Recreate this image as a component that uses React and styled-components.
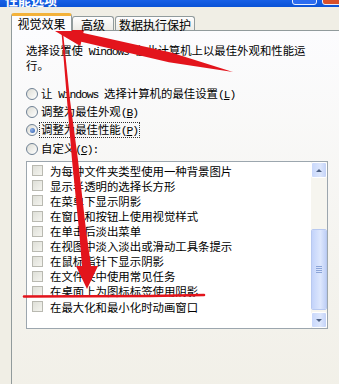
import styled, { createGlobalStyle } from "styled-components";

const GlobalStyle = createGlobalStyle`
  html, body { margin: 0; padding: 0; }
  body {
    width: 339px;
    height: 384px;
    overflow: hidden;
    background: #f0eee5;
    font-family: "Noto Sans CJK SC", sans-serif;
    font-size: 11.4px;
    color: #000;
  }
`;

const Window = styled.div`
  position: relative;
  width: 339px;
  height: 384px;
  overflow: hidden;
  background: #f0eee5;
`;

const TitleBar = styled.div`
  height: 7px;
  display: flex;
  justify-content: space-between;
  background: linear-gradient(#1860e6, #0a52d6);
  overflow: hidden;
`;

const TitleText = styled.div`
  margin: -7px 0 0 5px;
  color: #fff;
  font-weight: 700;
  font-size: 13px;
  line-height: 13px;
`;

const TitleButtons = styled.div`
  display: flex;
  gap: 5px;
  margin-top: -12px;
  margin-right: -8px;
`;

const TitleButton = styled.div`
  width: 25px;
  height: 17px;
  box-sizing: border-box;
  border: 1px solid #e8efff;
  border-radius: 3px;
  background: ${(p) => (p.$close ? "#d9502a" : "#2c6cf0")};
`;

const Body = styled.div`
  padding: 6px 0 0 11px;
`;

const TabStrip = styled.div`
  display: flex;
  align-items: flex-end;
  height: 18px;
  margin-bottom: -1px;
  position: relative;
  z-index: 1;
`;

const Tab = styled.div`
  box-sizing: border-box;
  display: flex;
  align-items: center;
  justify-content: center;
  font-size: 12px;
  width: ${(p) => p.$w}px;
  height: ${(p) => (p.$active ? 18 : 14)}px;
  margin-bottom: ${(p) => (p.$active ? 0 : 1)}px;
  border: 1px solid #919b9c;
  border-bottom: none;
  border-top: ${(p) => (p.$active ? "3px solid #f3b23a" : "1px solid #919b9c")};
  border-radius: 3px 3px 0 0;
  background: ${(p) =>
    p.$active ? "#fcfcfe" : "linear-gradient(#fefefe, #ecebe6)"};
  padding-top: ${(p) => (p.$active ? 0 : 1)}px;
  margin-right: ${(p) => (p.$active ? 0 : 1)}px;
`;

const Panel = styled.div`
  width: 400px;
  height: 400px;
  box-sizing: border-box;
  border: 1px solid #919b9c;
  background: linear-gradient(#fcfcfe, #f4f3ee 60%, #f1efe6);
  padding: 12.5px 0 0 14px;
`;

const Intro = styled.p`
  margin: 0;
  line-height: 13px;
  white-space: nowrap;
`;

const Latin = styled.span`
  font-family: "Liberation Mono", monospace;
  letter-spacing: -1.1px;
`;

const RadioGroup = styled.div`
  margin-top: 13px;
  display: flex;
  flex-direction: column;
`;

const RadioRow = styled.div`
  display: flex;
  align-items: center;
  height: 18.3px;
  white-space: nowrap;
`;

const Radio = styled.span`
  position: relative;
  width: 12px;
  height: 12px;
  box-sizing: border-box;
  border-radius: 50%;
  border: 1px solid #6f8194;
  background: linear-gradient(135deg, #dcdcd4, #ffffff);
  margin-right: 2px;
  flex-shrink: 0;

  &::after {
    content: "";
    display: ${(p) => (p.$checked ? "block" : "none")};
    position: absolute;
    left: 2.5px;
    top: 2.5px;
    width: 5px;
    height: 5px;
    border-radius: 50%;
    background: radial-gradient(circle at 35% 35%, #8fb0e6, #2f5fb0);
  }
`;

const Label = styled.span`
  padding: 0 1px;
  outline: ${(p) => (p.$focus ? "1px dotted #333" : "none")};
  line-height: 12px;
`;

const Key = styled.span`
  text-decoration: underline;
`;

const ListBox = styled.div`
  margin-top: 3.5px;
  width: 302px;
  height: 168px;
  box-sizing: border-box;
  border: 1px solid #9ca6ae;
  background: #fff;
  display: flex;
`;

const Items = styled.div`
  flex: 1;
  padding: 1px 0 0 5px;
`;

const Item = styled.div`
  display: flex;
  align-items: center;
  height: 15.1px;
  white-space: nowrap;
`;

const CheckBox = styled.span`
  width: 11px;
  height: 11px;
  box-sizing: border-box;
  border: 1px solid #b9b9b1;
  background: linear-gradient(135deg, #dedfd8, #f4f4ef);
  margin-right: 7px;
  flex-shrink: 0;
`;

const ScrollBar = styled.div`
  width: 16px;
  display: flex;
  flex-direction: column;
  background: #f6f5ef;
`;

const ScrollButton = styled.div`
  height: 16px;
  box-sizing: border-box;
  border: 1px solid #fff;
  border-radius: 2px;
  background: linear-gradient(90deg, #c9d8fb, #dce6fc 60%, #c4d3f8);
  display: flex;
  align-items: center;
  justify-content: center;

  &::before {
    content: "";
    border-left: 3px solid transparent;
    border-right: 3px solid transparent;
    ${(p) =>
      p.$down
        ? "border-top: 3px solid #4d6185;"
        : "border-bottom: 3px solid #4d6185;"}
  }
`;

const Track = styled.div`
  flex: 1;
  padding: 51px 0 1px;
`;

const Thumb = styled.div`
  height: 81px;
  box-sizing: border-box;
  border: 1px solid #fff;
  outline: 1px solid #b8c9f0;
  outline-offset: -1px;
  border-radius: 2px;
  background: linear-gradient(90deg, #c3d3fa, #dde7fd 60%, #c0d0f6);
  display: flex;
  flex-direction: column;
  align-items: center;
  justify-content: center;
  gap: 1px;
`;

const Grip = styled.span`
  width: 6px;
  height: 1px;
  background: #8ba4d8;
`;

const Annotations = styled.svg`
  position: absolute;
  left: 0;
  top: 0;
  pointer-events: none;
`;

const options = [
  { pre: "让", latin: " Windows ", text: "选择计算机的最佳设置", key: "L" },
  { text: "调整为最佳外观", key: "B" },
  { text: "调整为最佳性能", key: "P", checked: true },
  { text: "自定义", key: "C", colon: true },
];

const effects = [
  "为每种文件夹类型使用一种背景图片",
  "显示半透明的选择长方形",
  "在菜单下显示阴影",
  "在窗口和按钮上使用视觉样式",
  "在单击后淡出菜单",
  "在视图中淡入淡出或滑动工具条提示",
  "在鼠标指针下显示阴影",
  "在文件夹中使用常见任务",
  "在桌面上为图标标签使用阴影",
  "在最大化和最小化时动画窗口",
];

export default function App() {
  return (
    <Window>
      <GlobalStyle />
      <TitleBar>
        <TitleText>性能选项</TitleText>
        <TitleButtons>
          <TitleButton />
          <TitleButton $close />
        </TitleButtons>
      </TitleBar>
      <Body>
        <TabStrip>
          <Tab $active $w={61}>视觉效果</Tab>
          <Tab $w={42}>高级</Tab>
          <Tab $w={80}>数据执行保护</Tab>
        </TabStrip>
        <Panel>
          <Intro>
            选择设置使<Latin> Windows </Latin>在此计算机上以最佳外观和性能运
            <br />
            行。
          </Intro>
          <RadioGroup>
            {options.map((o) => (
              <RadioRow key={o.key}>
                <Radio $checked={o.checked} />
                <Label $focus={o.checked}>
                  {o.pre}
                  {o.latin && <Latin>{o.latin}</Latin>}
                  {o.text}
                  <Latin>
                    (<Key>{o.key}</Key>){o.colon ? ":" : ""}
                  </Latin>
                </Label>
              </RadioRow>
            ))}
          </RadioGroup>
          <ListBox>
            <Items>
              {effects.map((e) => (
                <Item key={e}>
                  <CheckBox />
                  {e}
                </Item>
              ))}
            </Items>
            <ScrollBar>
              <ScrollButton />
              <Track>
                <Thumb>
                  <Grip />
                  <Grip />
                  <Grip />
                  <Grip />
                </Thumb>
              </Track>
              <ScrollButton $down />
            </ScrollBar>
          </ListBox>
        </Panel>
      </Body>
      <Annotations width="339" height="384" viewBox="0 0 339 384">
        <polygon
          fill="#e3141c"
          points="55,31 84.3,28.5 83.3,32.9 171.1,52.5 233,72 168.9,62.3 81.3,41.7 80.3,46.1"
        />
        <polygon
          fill="#e3141c"
          points="61.5,32 67,100 72,160 79,230 82,266 76,266 87,289 98,266 91,266 86,230 78,160 70,100 63,32"
        />
        <path
          d="M24 296.5 L150 296 L204 295"
          stroke="#e3141c"
          strokeWidth="2.6"
          fill="none"
          strokeLinecap="round"
        />
      </Annotations>
    </Window>
  );
}
